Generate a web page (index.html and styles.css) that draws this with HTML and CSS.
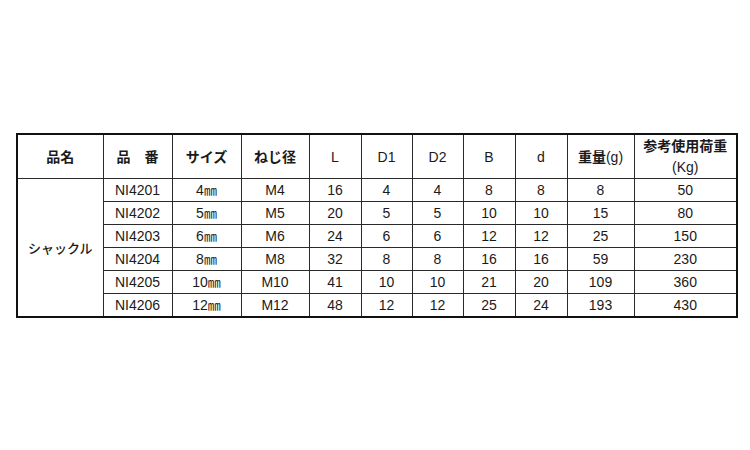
FILE: index.html
```html
<!DOCTYPE html>
<html lang="ja">
<head>
<meta charset="utf-8">
<link rel="stylesheet" href="styles.css">
</head>
<body>
<div class="page">
<table class="spec">
<colgroup>
<col class="c1"><col class="c2"><col class="c3"><col class="c4"><col class="c5"><col class="c6"><col class="c7"><col class="c8"><col class="c9"><col class="c10"><col class="c11">
</colgroup>
<thead>
<tr>
<th class="jp">品名</th>
<th class="jp">品　番</th>
<th class="jp">サイズ</th>
<th class="jp">ねじ径</th>
<th>L</th>
<th>D1</th>
<th>D2</th>
<th>B</th>
<th>d</th>
<th class="jp">重量<span class="lat">(g)</span></th>
<th class="jp">参考使用荷重<br><span class="lat">(Kg)</span></th>
</tr>
</thead>
<tbody>
<tr><td rowspan="6" class="name">シャックル</td><td>NI4201</td><td>4<span class="mm">㎜</span></td><td>M4</td><td>16</td><td>4</td><td>4</td><td>8</td><td>8</td><td>8</td><td>50</td></tr>
<tr><td>NI4202</td><td>5<span class="mm">㎜</span></td><td>M5</td><td>20</td><td>5</td><td>5</td><td>10</td><td>10</td><td>15</td><td>80</td></tr>
<tr><td>NI4203</td><td>6<span class="mm">㎜</span></td><td>M6</td><td>24</td><td>6</td><td>6</td><td>12</td><td>12</td><td>25</td><td>150</td></tr>
<tr><td>NI4204</td><td>8<span class="mm">㎜</span></td><td>M8</td><td>32</td><td>8</td><td>8</td><td>16</td><td>16</td><td>59</td><td>230</td></tr>
<tr><td>NI4205</td><td>10<span class="mm">㎜</span></td><td>M10</td><td>41</td><td>10</td><td>10</td><td>21</td><td>20</td><td>109</td><td>360</td></tr>
<tr><td>NI4206</td><td>12<span class="mm">㎜</span></td><td>M12</td><td>48</td><td>12</td><td>12</td><td>25</td><td>24</td><td>193</td><td>430</td></tr>
</tbody>
</table>
</div>
</body>
</html>
```

FILE: styles.css
```css
html, body {
  margin: 0;
  padding: 0;
  background: #ffffff;
}
.page {
  padding: 133px 0 0 16px;
}
.spec {
  border-collapse: collapse;
  table-layout: fixed;
  width: 721px;
  border: 2px solid #111;
  font-family: "Liberation Sans", Arial, "Noto Sans CJK JP", sans-serif;
  font-size: 14px;
  color: #1a1a1a;
}
.c1 { width: 86px; }
.c2 { width: 69px; }
.c3 { width: 69px; }
.c4 { width: 68px; }
.c5 { width: 52px; }
.c6 { width: 51px; }
.c7 { width: 51px; }
.c8 { width: 52px; }
.c9 { width: 52px; }
.c10 { width: 67px; }
.c11 { width: 103px; }
.spec th, .spec td {
  border: 1px solid #2a2a2a;
  text-align: center;
  padding: 0;
  line-height: 16px;
}
.spec th {
  height: 43px;
  font-weight: normal;
  font-size: 14px;
}
.spec td {
  height: 22px;
}
.spec th.jp {
  font-family: "Noto Sans CJK JP", sans-serif;
  font-weight: 700;
  font-size: 14px;
  line-height: 21px;
}
.spec th .lat {
  font-family: "Liberation Sans", Arial, sans-serif;
  font-weight: normal;
  font-size: 14px;
}
.spec td.name {
  font-family: "Noto Sans CJK JP", sans-serif;
  font-weight: 500;
  font-size: 13px;
}
.mm {
  font-family: "Noto Sans CJK JP", sans-serif;
  font-size: 13px;
}
```
